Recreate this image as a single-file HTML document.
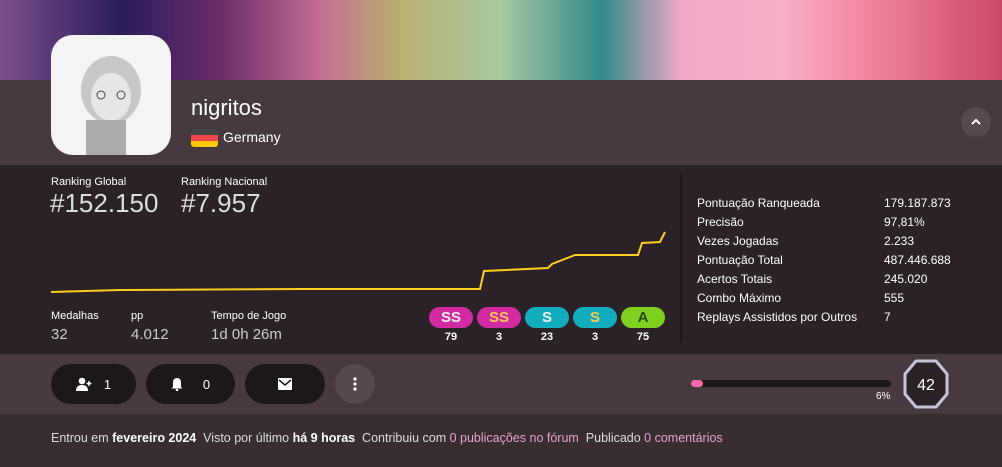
<!DOCTYPE html>
<html><head><meta charset="utf-8"><style>
*{margin:0;padding:0;box-sizing:border-box}
body{width:1002px;height:467px;overflow:hidden;background:#2a2226;font-family:"Liberation Sans",sans-serif;color:#fff;position:relative}
.abs{position:absolute}
.banner{left:0;top:0;width:1002px;height:80px;background:linear-gradient(90deg,#7a4f8a 0%,#2a1d5a 12%,#6a2d6a 22%,#c46e92 32%,#b8b070 40%,#a8c8a0 50%,#2f8a88 60%,#f0a8c8 68%,#f7b0c8 78%,#f07e98 88%,#c84a68 100%)}
.head{left:0;top:80px;width:1002px;height:85px;background:#463a40}
.stats{left:0;top:165px;width:1002px;height:189px;background:#2a2226}
.bar{left:0;top:354px;width:1002px;height:60px;background:#463a40}
.foot{left:0;top:414px;width:1002px;height:53px;background:#382e32}
.lbl{font-size:11px;color:#fff}
.big{font-size:26px;color:#ddd;font-weight:300}
.val{font-size:15px;color:#ccc}
.pill{height:24px;border-radius:12px;background:#1c1719;display:flex;align-items:center;justify-content:center;font-size:13px}
.grade{width:44px;height:21px;border-radius:11px;text-align:center;font-weight:bold;font-size:15px;line-height:21px}
.gn{width:44px;text-align:center;font-size:11px;font-weight:bold}
.rt td{font-size:12px;padding:0;height:19px}
</style></head><body>
<div class="abs banner"></div>
<div class="abs head"></div>
<div class="abs stats"></div>
<div class="abs bar"></div>
<div class="abs foot"></div>
<div class="abs" style="left:51px;top:35px;width:120px;height:120px;border-radius:22px;background:#f4f4f4;overflow:hidden">
<svg width="120" height="120"><ellipse cx="60" cy="55" rx="30" ry="34" fill="#c8c8c8"/><ellipse cx="60" cy="62" rx="20" ry="24" fill="#e6e6e6"/><rect x="35" y="85" width="40" height="35" fill="#aaa"/><circle cx="50" cy="60" r="4" fill="none" stroke="#444"/><circle cx="70" cy="60" r="4" fill="none" stroke="#444"/></svg></div>
<div class="abs" style="left:191px;top:95px;font-size:22px">nigritos</div>
<div class="abs" style="left:191px;top:129px;width:27px;height:18px;border-radius:3px;background:linear-gradient(#444 0 33%,#f04848 33% 66%,#ffc800 66%)"></div>
<div class="abs" style="left:223px;top:129px;font-size:14px">Germany</div>
<div class="abs" style="left:961px;top:107px;width:30px;height:30px;border-radius:15px;background:#564a50"><svg width="30" height="30"><path d="M11 17 L15 13 L19 17" fill="none" stroke="#fff" stroke-width="2"/></svg></div>
<div class="abs lbl" style="left:51px;top:176px">Ranking Global</div>
<div class="abs lbl" style="left:181px;top:176px">Ranking Nacional</div>
<div class="abs big" style="left:50px;top:188px">#152.150</div>
<div class="abs big" style="left:181px;top:188px">#7.957</div>
<svg class="abs" style="left:0;top:220px" width="680" height="80"><polyline fill="none" stroke="#ffcc22" stroke-width="2" points="51,72 120,70 300,69 480,69 484,51 548,48 552,44 570,37 575,35 638,35 642,23 660,22 665,12"/></svg>
<div class="abs lbl" style="left:51px;top:310px">Medalhas</div>
<div class="abs lbl" style="left:131px;top:310px">pp</div>
<div class="abs lbl" style="left:211px;top:310px">Tempo de Jogo</div>
<div class="abs val" style="left:51px;top:326px">32</div>
<div class="abs val" style="left:131px;top:326px">4.012</div>
<div class="abs val" style="left:211px;top:326px">1d 0h 26m</div>
<div class="abs grade" style="left:429px;top:307px;background:#d22aa0;color:#eee">SS</div>
<div class="abs grade" style="left:477px;top:307px;background:#d22aa0;color:#ffc850">SS</div>
<div class="abs grade" style="left:525px;top:307px;background:#12aebe;color:#eee">S</div>
<div class="abs grade" style="left:573px;top:307px;background:#12aebe;color:#ffc850">S</div>
<div class="abs grade" style="left:621px;top:307px;background:#80d020;color:#2a4a10">A</div>
<div class="abs gn" style="left:429px;top:331px">79</div>
<div class="abs gn" style="left:477px;top:331px">3</div>
<div class="abs gn" style="left:525px;top:331px">23</div>
<div class="abs gn" style="left:573px;top:331px">3</div>
<div class="abs gn" style="left:621px;top:331px">75</div>
<div class="abs" style="left:680px;top:175px;width:2px;height:168px;background:#1c1719"></div>
<table class="abs rt" style="left:697px;top:193px;border-collapse:collapse">
<tr><td style="width:187px">Pontuação Ranqueada</td><td>179.187.873</td></tr>
<tr><td>Precisão</td><td>97,81%</td></tr>
<tr><td>Vezes Jogadas</td><td>2.233</td></tr>
<tr><td>Pontuação Total</td><td>487.446.688</td></tr>
<tr><td>Acertos Totais</td><td>245.020</td></tr>
<tr><td>Combo Máximo</td><td>555</td></tr>
<tr><td>Replays Assistidos por Outros</td><td>7</td></tr>
</table>
<div class="abs pill" style="left:51px;top:364px;width:85px;height:40px;border-radius:20px"><svg width="16" height="14"><circle cx="6" cy="4" r="3.3" fill="#fff"/><path d="M0 14 Q0 8 6 8 Q12 8 12 14Z" fill="#fff"/><path d="M13 4 V9 M10.5 6.5 H15.5" stroke="#fff" stroke-width="1.5"/></svg><span style="margin-left:12px">1</span></div>
<div class="abs pill" style="left:146px;top:364px;width:89px;height:40px;border-radius:20px"><svg width="12" height="14"><path d="M6 1 Q10 1 10 6 V10 L11.5 11.5 H0.5 L2 10 V6 Q2 1 6 1Z" fill="#fff"/><circle cx="6" cy="13" r="1.3" fill="#fff"/></svg><span style="margin-left:20px">0</span></div>
<div class="abs pill" style="left:245px;top:364px;width:80px;height:40px;border-radius:20px"><svg width="14" height="12"><rect width="14" height="12" rx="1" fill="#fff"/><path d="M1 2 L7 7 L13 2" fill="none" stroke="#1c1719" stroke-width="1.5"/></svg></div>
<div class="abs pill" style="left:335px;top:364px;width:40px;height:40px;border-radius:20px;background:#564a50"><svg width="4" height="14"><circle cx="2" cy="2" r="1.6" fill="#fff"/><circle cx="2" cy="7" r="1.6" fill="#fff"/><circle cx="2" cy="12" r="1.6" fill="#fff"/></svg></div>
<div class="abs" style="left:691px;top:380px;width:200px;height:7px;border-radius:4px;background:#1c1719"><div style="width:12px;height:7px;border-radius:4px;background:#ff66aa"></div></div>
<div class="abs" style="left:876px;top:391px;font-size:10px">6%</div>
<svg class="abs" style="left:902px;top:358px" width="48" height="52"><polygon points="14,3 34,3 45,16 45,36 34,49 14,49 3,36 3,16" fill="#2a2226" stroke="#c8c4d8" stroke-width="3" stroke-linejoin="round"/><text x="24" y="32" text-anchor="middle" fill="#fff" font-size="16" font-family="Liberation Sans">42</text></svg>
<div class="abs" style="left:51px;top:431px;font-size:12.5px;color:#ddd;white-space:nowrap">Entrou em <b style="color:#fff">fevereiro 2024</b>&nbsp; Visto por último <b style="color:#fff">há 9 horas</b>&nbsp; Contribuiu com <span style="color:#e8a0c8">0 publicações no fórum</span>&nbsp; Publicado <span style="color:#e8a0c8">0 comentários</span></div>
</body></html>
